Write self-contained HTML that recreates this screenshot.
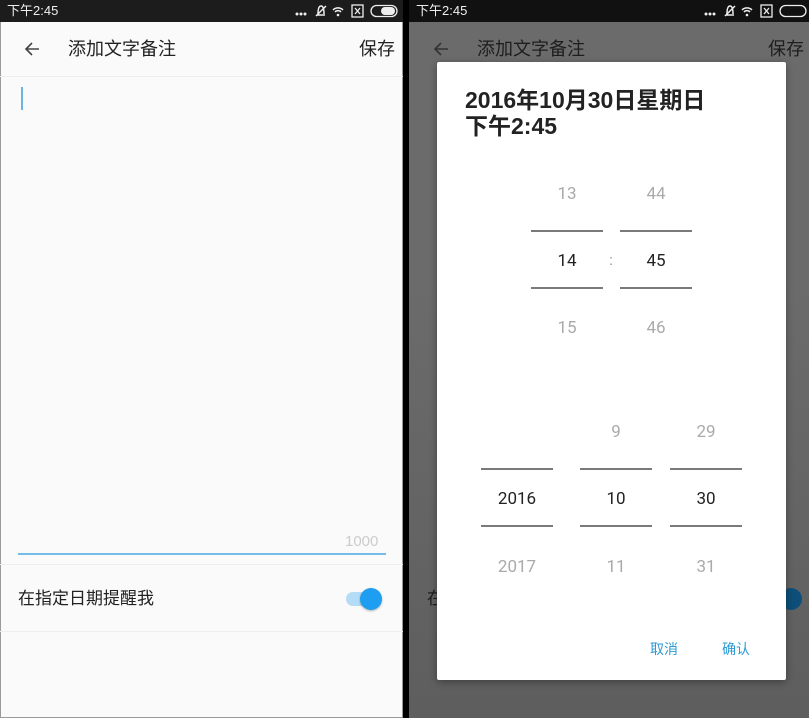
<!DOCTYPE html>
<html><head><meta charset="utf-8"><style>
*{margin:0;padding:0;box-sizing:border-box}
body{width:809px;height:718px;overflow:hidden;background:#000;position:relative;font-family:"Liberation Sans","Noto Sans CJK SC",sans-serif}
.a{position:absolute}
.t{position:absolute;white-space:nowrap;line-height:1}
.sb{height:22px;top:0;font-size:13px;color:#fff}
.n{position:absolute;width:72px;text-align:center;font-size:17px;line-height:1;font-family:"Roboto","Liberation Sans",sans-serif}
.g{color:#aaa}.k{color:#222}
.ln{position:absolute;height:2px;width:72px;background:#7a7a7a}
</style></head><body>
<!-- left -->
<div class="a" style="left:0;top:0;width:403px;height:718px;background:#fafafa;border:1px solid #9a9a9a;border-top:0"></div>
<div class="a sb" style="left:0;width:403px;background:#1c1c1c"></div>
<div class="t" style="left:7px;top:4px;font-size:13px;color:#eee">下午2:45</div>
<svg class="a" style="left:295px;top:4px" width="105" height="14" viewBox="0 0 105 14">
<g fill="#eee"><circle cx="2" cy="10" r="1.5"/><circle cx="6" cy="10" r="1.5"/><circle cx="10" cy="10" r="1.5"/></g>
<path d="M22 11h8M23 10c0-6 1-8 3-8s3 2 3 8M21 12l10-10" stroke="#eee" stroke-width="1.5" fill="none"/>
<path d="M38 6a7 7 0 0 1 10 0M40 8a4 4 0 0 1 6 0" stroke="#eee" stroke-width="1.5" fill="none"/><circle cx="43" cy="11" r="1.3" fill="#eee"/>
<rect x="57" y="1" width="11" height="12" stroke="#eee" stroke-width="1.3" fill="none"/><path d="M60 4l5 6M65 4l-5 6" stroke="#eee" stroke-width="1.3"/>
<rect x="76" y="1.5" width="26" height="11" rx="5.5" stroke="#eee" stroke-width="1.3" fill="none"/><rect x="86" y="3" width="14" height="8" rx="4" fill="#eee"/>
</svg>
<svg class="a" style="left:23px;top:41px" width="18" height="16" viewBox="0 0 18 16"><path d="M16 8H3M9 2L3 8l6 6" stroke="#444" stroke-width="1.6" fill="none"/></svg>
<div class="t" style="left:68px;top:40px;font-size:18px;color:#222">添加文字备注</div>
<div class="t" style="left:359px;top:40px;font-size:18px;color:#222">保存</div>
<div class="a" style="left:0;top:76px;width:403px;height:1px;background:#eee"></div>
<div class="a" style="left:21px;top:87px;width:2px;height:23px;background:#6ab4e6"></div>
<div class="t" style="left:345px;top:534px;font-size:15px;color:#ccc">1000</div>
<div class="a" style="left:18px;top:553px;width:368px;height:2px;background:#74bde8"></div>
<div class="a" style="left:0;top:564px;width:403px;height:1px;background:#eee"></div>
<div class="t" style="left:18px;top:590px;font-size:17px;color:#222">在指定日期提醒我</div>
<div class="a" style="left:346px;top:592px;width:28px;height:14px;border-radius:7px;background:#b5dcf6"></div>
<div class="a" style="left:360px;top:588px;width:22px;height:22px;border-radius:50%;background:#1e9ef0;box-shadow:0 1px 2px rgba(0,0,0,.3)"></div>
<div class="a" style="left:0;top:631px;width:403px;height:1px;background:#eee"></div>
<!-- right -->
<div class="a" style="left:409px;top:0;width:400px;height:718px;background:linear-gradient(#6b6b6b 40%,#5e5e5e)"></div>
<div class="a sb" style="left:409px;width:400px;background:#111"></div>
<div class="t" style="left:416px;top:4px;font-size:13px;color:#eee">下午2:45</div>
<svg class="a" style="left:704px;top:4px" width="105" height="14" viewBox="0 0 105 14">
<g fill="#eee"><circle cx="2" cy="10" r="1.5"/><circle cx="6" cy="10" r="1.5"/><circle cx="10" cy="10" r="1.5"/></g>
<path d="M22 11h8M23 10c0-6 1-8 3-8s3 2 3 8M21 12l10-10" stroke="#eee" stroke-width="1.5" fill="none"/>
<path d="M38 6a7 7 0 0 1 10 0M40 8a4 4 0 0 1 6 0" stroke="#eee" stroke-width="1.5" fill="none"/><circle cx="43" cy="11" r="1.3" fill="#eee"/>
<rect x="57" y="1" width="11" height="12" stroke="#eee" stroke-width="1.3" fill="none"/><path d="M60 4l5 6M65 4l-5 6" stroke="#eee" stroke-width="1.3"/>
<rect x="76" y="1.5" width="26" height="11" rx="5.5" stroke="#eee" stroke-width="1.3" fill="none"/>
</svg>
<svg class="a" style="left:432px;top:41px" width="18" height="16" viewBox="0 0 18 16"><path d="M16 8H3M9 2L3 8l6 6" stroke="#333" stroke-width="1.6" fill="none"/></svg>
<div class="t" style="left:477px;top:40px;font-size:18px;color:#1e1e1e">添加文字备注</div>
<div class="t" style="left:768px;top:40px;font-size:18px;color:#1e1e1e">保存</div>
<div class="t" style="left:427px;top:590px;font-size:17px;color:#1e1e1e">在</div>
<div class="a" style="left:780px;top:588px;width:22px;height:22px;border-radius:50%;background:#0d4f78"></div>
<div class="a" style="left:437px;top:62px;width:349px;height:618px;background:#fff;border-radius:2px;box-shadow:0 2px 8px rgba(0,0,0,.35)"></div>
<div class="t" style="left:465px;top:87px;font-size:23px;font-weight:bold;color:#222;line-height:26px">2016年10月30日星期日<br>下午2:45</div>
<div class="n g" style="left:531px;top:186px">13</div><div class="n g" style="left:620px;top:186px">44</div>
<div class="ln" style="left:531px;top:230px"></div><div class="ln" style="left:620px;top:230px"></div>
<div class="n k" style="left:531px;top:253px">14</div><div class="n k" style="left:620px;top:253px">45</div>
<div class="t" style="left:609px;top:253px;font-size:15px;color:#999">:</div>
<div class="ln" style="left:531px;top:287px"></div><div class="ln" style="left:620px;top:287px"></div>
<div class="n g" style="left:531px;top:320px">15</div><div class="n g" style="left:620px;top:320px">46</div>
<div class="n g" style="left:580px;top:424px">9</div><div class="n g" style="left:670px;top:424px">29</div>
<div class="ln" style="left:481px;top:468px"></div><div class="ln" style="left:580px;top:468px"></div><div class="ln" style="left:670px;top:468px"></div>
<div class="n k" style="left:481px;top:491px">2016</div><div class="n k" style="left:580px;top:491px">10</div><div class="n k" style="left:670px;top:491px">30</div>
<div class="ln" style="left:481px;top:525px"></div><div class="ln" style="left:580px;top:525px"></div><div class="ln" style="left:670px;top:525px"></div>
<div class="n g" style="left:481px;top:559px">2017</div><div class="n g" style="left:580px;top:559px">11</div><div class="n g" style="left:670px;top:559px">31</div>
<div class="t" style="left:650px;top:642px;font-size:14px;color:#2b9ad6">取消</div>
<div class="t" style="left:722px;top:642px;font-size:14px;color:#2b9ad6">确认</div>
</body></html>
